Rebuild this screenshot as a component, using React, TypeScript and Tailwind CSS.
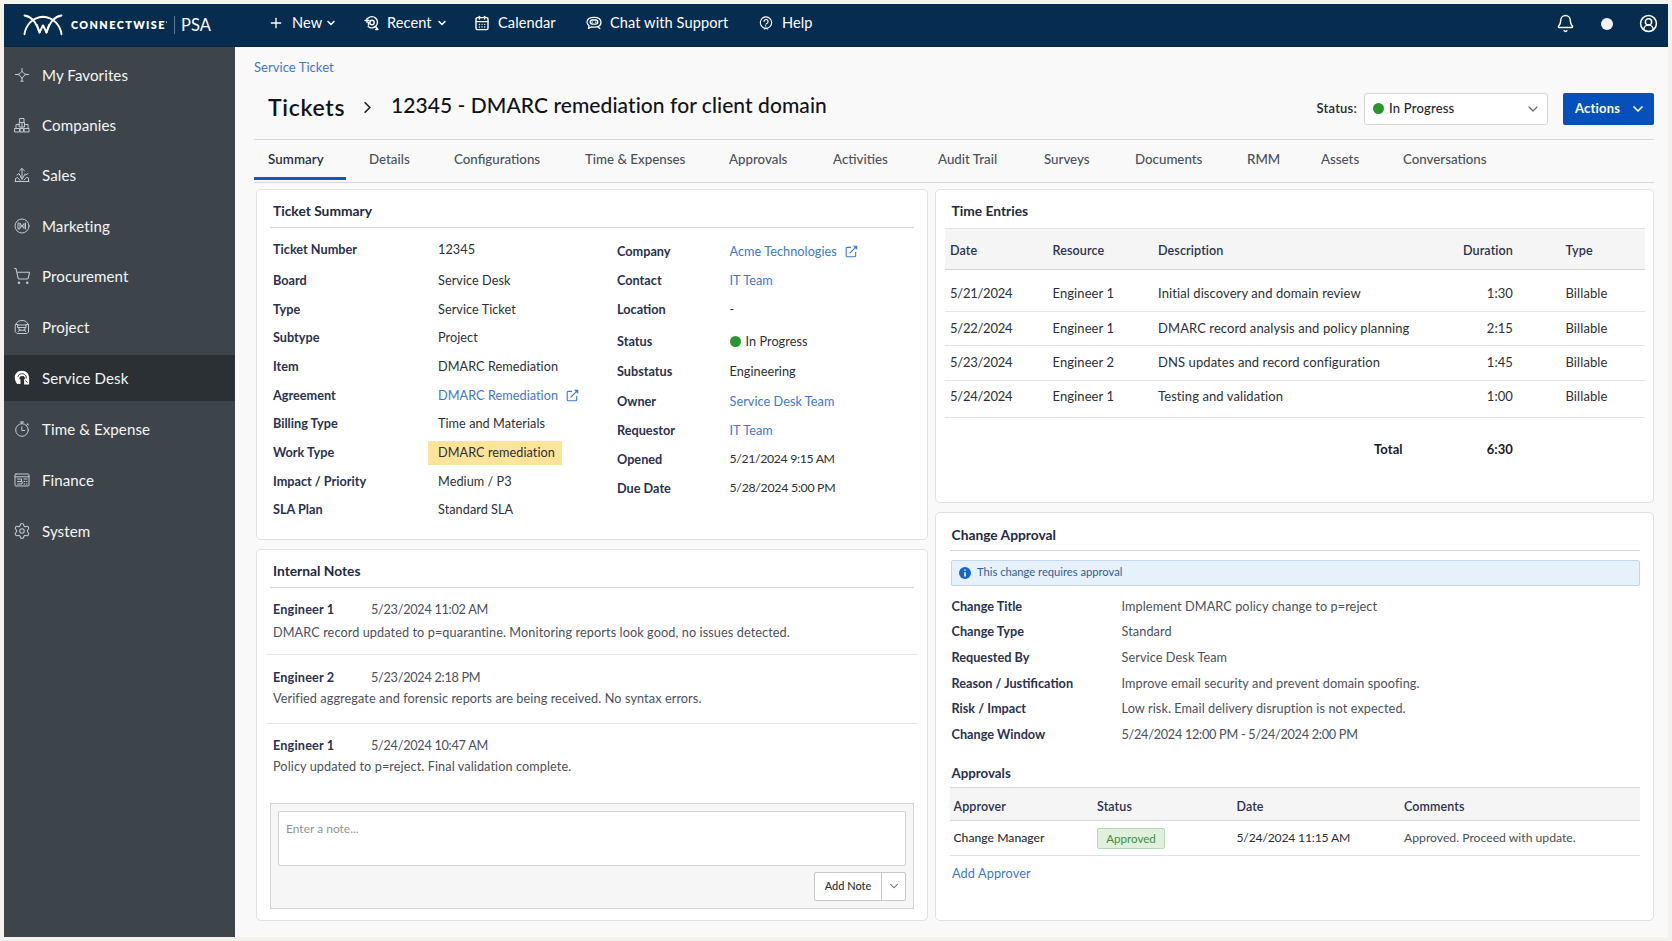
import type { ReactNode } from "react";
import { Bell, CalendarDays, ChevronDown, ChevronRight, CircleUserRound, Plus, Settings, ShoppingCart } from "lucide-react";

function Glyph({ children, className = "size-4" }: { children: ReactNode; className?: string }) {
  return (
    <svg viewBox="0 0 16 16" fill="none" stroke="currentColor" strokeWidth="1" strokeLinecap="round" strokeLinejoin="round" className={className}>
      {children}
    </svg>
  );
}

const FavoritesIcon = () => (
  <Glyph>
    <path d="M8 1.500v2.700L6 6.500 4 7.500H1.500M8 4.200l2 2.300 2 1h2.500M4 7.500l2.200 1.300L8 11.500l1.800-2.700L12 7.500M8 11.500v2.500M6.800 14.200h2.400" />
  </Glyph>
);

const CompaniesIcon = () => (
  <Glyph>
    <path d="M6 1.500h4v4H6zM5.500 5.500h5v4.500h-5zM1 11.500h4.500V15H1zM6.500 11.500h3V15h-3zM10.500 11.500H15V15h-4.500zM2 11.500V7.500h3.500M14 11.500V7.500h-3.500M8 5.500V11" />
  </Glyph>
);

const SalesIcon = () => (
  <Glyph>
    <path d="M8 11V1.500M5.500 4 8 1.500 10.500 4M1 14.500h14M1.500 14.500v-3l2-1 2.500 3M3 8l2-1.500 3 6 3-5.500M10 13l2.500-2.500 2 .5v3.500M11.500 8l2.500-1.500" />
  </Glyph>
);

const MarketingIcon = () => (
  <Glyph>
    <circle cx="8" cy="8" r="7" />
    <path d="M5 5H4v6h1.500M6 5.500v5l2-2.500 2 2.500v-5L8 8zM11.500 5v6" />
  </Glyph>
);

const ProjectIcon = () => (
  <Glyph>
    <path d="M1.500 5.500 4 2.500c2.500-1.300 5.500-1.300 8 0l2.500 3v7.500l-1.500 1.500H3L1.500 13zM4 6h8v2.500H4zM5 8.500v2.800h6V8.500M4.500 12.500l1.500-2M11.500 12.500l-1.500-2M1.500 5.500H4M12 5.500h2.500" />
  </Glyph>
);

const ServiceDeskIcon = () => (
  <svg viewBox="0 0 16 16" className="size-4">
    <path d="M8 .8C3.600.800.800 3.700.800 7.600c0 2.600 1 4.600 2.400 6.300h3.300V9.500L5 8.200l1.500-1.900L9.800 6l1.500 2.200-1.200 1.300v5.100h5V8C15.100 3.700 12.200.8 8 .8z" fill="#fff" />
    <path d="M4 6.800C4.500 3.900 8 3 10.300 4.300c1.600.9 2.300 2.400 1.900 4.200M8.200 8v6.600M11.500 10.500l2 2.200" stroke="#2b3033" strokeWidth="1" fill="none" />
  </svg>
);

const TimeIcon = () => (
  <Glyph>
    <circle cx="8" cy="9" r="6.300" />
    <path d="M6.300 1h3.400M8 1v1.700M13.200 2.700l1.300 1.200M12.300 4.500l1.500-1.200M7.800 5.800V9.500h2.800" />
  </Glyph>
);

const FinanceIcon = () => (
  <Glyph>
    <rect x="1" y="2" width="14" height="12" rx="1" />
    <path d="M1 4.800h14M3.500 7h4v2.500h-4M3.500 12H8V9.500M10 7h3M10 9.500h.8M12.500 9.500h.5M10 12h.8M12.500 12h.5" />
  </Glyph>
);

const RecentIcon = () => (
  <Glyph className="size-[16px]">
    <g strokeWidth="1.400">
      <path d="M4 3.200A5.600 5.600 0 1 1 4.200 11.500M1 5.500h4M3 3.500v4M12 12l2 2.500h-2.500" />
      <circle cx="8" cy="7.500" r="2.200" />
      <path d="M4.500 7.500v2.500" />
    </g>
  </Glyph>
);

const ChatIcon = () => (
  <Glyph className="size-[16px]">
    <g strokeWidth="1.300">
      <path d="M8 2.300c4.200 0 7 1.900 7 4.900s-2.800 4.900-7 4.900c-.9 0-1.800-.1-2.500-.3l-3 1.700.5-2.900C1.700 9.700 1 8.500 1 7.200c0-3 2.800-4.900 7-4.900z" />
      <path d="M6.300 5h3.400a2.100 2.100 0 0 1 0 4.200H6.300a2.100 2.100 0 0 1 0-4.200zM6 7.100h.5M9.500 7.100h.5" />
      <path d="M12 12l1.800 1.500" />
    </g>
  </Glyph>
);

const HelpIcon = () => (
  <Glyph className="size-[14px]">
    <circle cx="8" cy="7.500" r="6.500" strokeWidth="1.300" />
    <path d="M5.800 6.300A2.300 2.300 0 1 1 9.400 8.200L8 9.300M7.300 11.300h.4M6 14.800l2-.8 2 .8" strokeWidth="1.300" />
  </Glyph>
);

const CalendarIcon = () => (
  <span className="flex size-4 items-center justify-center">
    <CalendarDays size={16} strokeWidth={2.100} />
  </span>
);

const ExternalIcon = () => (
  <svg viewBox="0 0 14 14" fill="none" stroke="currentColor" strokeWidth="1.200" className="size-[13px]">
    <path d="M6.500 2.500H2.300c-.6 0-1 .4-1 1v8.200c0 .6.400 1 1 1h8.200c.6 0 1-.4 1-1V7.500M5 9l7-7" />
    <path d="M8.500.800h4.700v4.700z" fill="currentColor" stroke="none" />
  </svg>
);

function Logo() {
  return (
    <svg viewBox="0 0 40 22" fill="none" stroke="#fff" strokeWidth="1.900" strokeLinecap="round" strokeLinejoin="round" className="h-[22px] w-[40px]">
      <path d="M1.500 20.200C2.500 11.500 9.500 3.200 20 2.700c10.500.5 17.500 8.800 18.500 17.500" />
      <path d="M1.500 1.500c6.500 1 11 5 15 17l3.300-7h.4l3.300 7c4-12 8.500-16 15-17" />
      <path d="M14 11l2.500 7.500M26 11l-2.500 7.500" />
    </svg>
  );
}

function Dot() {
  return <span className="size-[11px] shrink-0 rounded-full bg-[#2b952d]" />;
}

function Header() {
  return (
    <header className="flex h-[43px] shrink-0 items-center border-b border-[#0a2340] bg-[#062c50] text-white">
      <div className="flex w-[266px] items-center pl-[19px]">
        <Logo />
        <span className="ml-[8px] flex w-[103px] pt-px text-[10.800px] font-extrabold tracking-[1.430px] whitespace-nowrap">
          CONNECTWISE
          <span className="mt-[4px] size-[1.500px] rounded-full bg-[#a9bccd]" />
        </span>
        <span className="h-[18px] w-px bg-[#5d7b98]" />
        <span className="ml-[6px] text-[16.500px]">PSA</span>
      </div>
      <nav className="flex flex-1 items-center pb-[4px] text-[14.600px] leading-[20px] tracking-[0.080px]">
        <div className="flex w-[94px] items-center">
          <Plus size={16} strokeWidth={2} className="-ml-[2px]" />
          <span className="ml-[8px]">New</span>
          <ChevronDown size={12} strokeWidth={3} className="ml-[3px]" />
        </div>
        <div className="flex w-[110px] items-center">
          <RecentIcon />
          <span className="ml-[7px]">Recent</span>
          <ChevronDown size={12} strokeWidth={3} className="ml-[4px]" />
        </div>
        <div className="flex w-[112px] items-center">
          <CalendarIcon />
          <span className="ml-2">Calendar</span>
        </div>
        <div className="flex w-[173px] items-center">
          <ChatIcon />
          <span className="ml-2">Chat with Support</span>
        </div>
        <div className="flex items-center">
          <HelpIcon />
          <span className="ml-[9px]">Help</span>
        </div>
      </nav>
      <div className="flex items-center pr-[10px] pb-[3px]">
        <Bell size={19} strokeWidth={1.800} />
        <span className="ml-[26px] size-[12px] rounded-full bg-[#f1f2f3]" />
        <CircleUserRound size={19} strokeWidth={1.900} className="ml-[26px]" />
      </div>
    </header>
  );
}

const sidebarItems: { label: string; icon: ReactNode; height: string; active?: boolean }[] = [
  { label: "My Favorites", icon: <FavoritesIcon />, height: "h-[50px]" },
  { label: "Companies", icon: <CompaniesIcon />, height: "h-[50px]" },
  { label: "Sales", icon: <SalesIcon />, height: "h-[50px]" },
  { label: "Marketing", icon: <MarketingIcon />, height: "h-[52px]" },
  { label: "Procurement", icon: <ShoppingCart size={18} strokeWidth={1.400} className="-mx-px" />, height: "h-[48px]" },
  { label: "Project", icon: <ProjectIcon />, height: "h-[54px]" },
  { label: "Service Desk", icon: <ServiceDeskIcon />, height: "h-[48px]", active: true },
  { label: "Time & Expense", icon: <TimeIcon />, height: "h-[54px]" },
  { label: "Finance", icon: <FinanceIcon />, height: "h-[48px]" },
  { label: "System", icon: <Settings size={18} strokeWidth={1.400} className="-mx-px" />, height: "h-[54px]" },
];

function Sidebar() {
  return (
    <aside className="w-[231px] shrink-0 bg-[#3e454a] pt-[3px]">
      {sidebarItems.map((item) => (
        <div key={item.label} className={`flex items-center ${item.height}`}>
          <div className={`flex h-[46px] w-full items-center pl-[10px] ${item.active ? "bg-[#2b3034] text-white" : "text-[#c6cacc]"}`}>
            {item.icon}
            <span className="ml-[12px] text-[15.100px] tracking-[0.080px] text-[#f4f5f6]">{item.label}</span>
          </div>
        </div>
      ))}
    </aside>
  );
}

const tabs = [
  { label: "Summary", width: "w-[101px]" },
  { label: "Details", width: "w-[85px]" },
  { label: "Configurations", width: "w-[131px]" },
  { label: "Time & Expenses", width: "w-[144px]" },
  { label: "Approvals", width: "w-[104px]" },
  { label: "Activities", width: "w-[105px]" },
  { label: "Audit Trail", width: "w-[106px]" },
  { label: "Surveys", width: "w-[91px]" },
  { label: "Documents", width: "w-[112px]" },
  { label: "RMM", width: "w-[74px]" },
  { label: "Assets", width: "w-[82px]" },
  { label: "Conversations", width: "w-[100px]" },
];

function PageHeading() {
  return (
    <>
      <a className="mt-[10px] h-[20px] text-[13px] leading-[20px] tracking-[0.050px] text-[#3d76d3]">Service Ticket</a>
      <div className="mt-[4px] flex h-[57.500px] items-center pb-[5px] pl-[14px]">
        <h1 className="mb-px w-[90px] text-[23px] font-semibold tracking-[0.700px] text-[#111317]">Tickets</h1>
        <ChevronRight size={19} strokeWidth={2.200} className="text-[#22252b]" />
        <h2 className="mb-[5px] ml-[14px] text-[21px] font-medium tracking-[0.060px] text-[#111317]">12345 - DMARC remediation for client domain</h2>
        <div className="mt-[3px] ml-auto flex items-center text-[13px] tracking-[0.200px] text-[#24272e]">
          <span className="font-semibold">Status:</span>
          <div className="ml-[7px] flex h-[32px] w-[184px] items-center rounded-[3px] border border-[#d4d6d9] bg-white pr-[6px] pl-[8px]">
            <Dot />
            <span className="ml-[5px] font-medium">In Progress</span>
            <ChevronDown size={16} strokeWidth={1.800} className="ml-auto text-[#666a70]" />
          </div>
          <button className="ml-[15px] flex h-[32px] w-[91px] items-center rounded-[2px] bg-[#0550ba] pr-[8px] pl-[12px] font-bold text-white">
            Actions
            <ChevronDown size={16} strokeWidth={2.600} className="ml-auto" />
          </button>
        </div>
      </div>
      <div className="flex h-[44px] border-t border-b border-[#d6d8da] pl-[14px] text-[13.300px] text-[#4a505c]">
        {tabs.map((tab, i) => (
          <div key={tab.label} className={`${tab.width} shrink-0 ${i === 0 ? "relative text-[#2b3140]" : ""}`}>
            <span className={`block leading-[38.500px] whitespace-nowrap ${i === 0 ? "font-semibold tracking-[0.100px]" : "font-medium"}`}>{tab.label}</span>
            {i === 0 && <span className="absolute bottom-[2px] -left-[14px] h-[3px] w-[92px] bg-[#1157bf]" />}
          </div>
        ))}
      </div>
    </>
  );
}

function Card({ className, children }: { className: string; children: ReactNode }) {
  return <section className={`flex shrink-0 flex-col rounded-[5px] border border-[#e0e1e3] bg-white ${className}`}>{children}</section>;
}

const heading = "text-[13.800px] font-bold text-[#232a45]";
const label = "font-bold tracking-normal text-[#2a3150]";

const summaryLeft: [string, ReactNode][] = [
  ["Ticket Number", "12345"],
  ["Board", "Service Desk"],
  ["Type", "Service Ticket"],
  ["Subtype", "Project"],
  ["Item", "DMARC Remediation"],
  [
    "Agreement",
    <a className="flex items-center gap-[8px] text-[#3d76d3]">
      DMARC Remediation <ExternalIcon />
    </a>,
  ],
  ["Billing Type", "Time and Materials"],
  ["Work Type", <span className="-ml-[10px] flex h-[24px] w-[134px] items-center bg-[#fde49b] pl-[10px]">DMARC remediation</span>],
  ["Impact / Priority", "Medium / P3"],
  ["SLA Plan", "Standard SLA"],
];

const summaryRight: [string, ReactNode, string][] = [
  [
    "Company",
    <a className="flex items-center gap-[8px] text-[#3d76d3]">
      Acme Technologies <ExternalIcon />
    </a>,
    "h-[29px]",
  ],
  ["Contact", <a className="text-[#3d76d3]">IT Team</a>, "h-[29px]"],
  ["Location", "-", "h-[29px]"],
  [
    "Status",
    <span className="flex items-center gap-[5px]">
      <Dot /> In Progress
    </span>,
    "h-[34px]",
  ],
  ["Substatus", "Engineering", "h-[27px]"],
  ["Owner", <a className="text-[#3d76d3]">Service Desk Team</a>, "h-[32px]"],
  ["Requestor", <a className="text-[#3d76d3]">IT Team</a>, "h-[26px]"],
  ["Opened", <span className="text-[12.300px] tracking-[-0.350px]">5/21/2024 9:15 AM</span>, "h-[32px]"],
  ["Due Date", <span className="text-[12.300px] tracking-[-0.280px]">5/28/2024 5:00 PM</span>, "h-[26px]"],
];

function TicketSummary() {
  return (
    <Card className="h-[351px]">
      <div className={`mx-[13px] flex h-[38px] shrink-0 items-center border-b border-[#d4d6d8] pt-[7px] pl-[3px] ${heading}`}>Ticket Summary</div>
      <div className="flex pl-[16px] text-[12.700px] tracking-[0.050px] text-[#2c2f36]">
        <div className="w-[344px] pt-[8.200px]">
          {summaryLeft.map(([name, value], i) => (
            <div key={name} className={`flex h-[28.660px] items-center ${i === 0 ? "mb-[2px]" : ""}`}>
              <span className={`w-[165px] ${label}`}>{name}</span>
              {value}
            </div>
          ))}
        </div>
        <div className="pt-[10px]">
          {summaryRight.map(([name, value, height]) => (
            <div key={name} className={`flex items-center ${height}`}>
              <span className={`w-[112.500px] ${label}`}>{name}</span>
              {value}
            </div>
          ))}
        </div>
      </div>
    </Card>
  );
}

const notes = [
  { author: "Engineer 1", date: "5/23/2024 11:02 AM", body: "DMARC record updated to p=quarantine. Monitoring reports look good, no issues detected.", box: "h-[67px] pt-[11px] border-b", gap: "mt-[3px]" },
  { author: "Engineer 2", date: "5/23/2024 2:18 PM", body: "Verified aggregate and forensic reports are being received. No syntax errors.", box: "h-[69px] pt-[12px] border-b", gap: "mt-[1px]" },
  { author: "Engineer 1", date: "5/24/2024 10:47 AM", body: "Policy updated to p=reject. Final validation complete.", box: "h-[79px] pt-[11px]", gap: "mt-[1px]" },
];

function InternalNotes() {
  return (
    <Card className="mt-[9px] h-[372px]">
      <div className={`mx-[13px] flex h-[38px] items-center border-b border-[#d4d6d8] pt-[7px] pl-[3px] ${heading}`}>Internal Notes</div>
      <div className="mx-[9px] text-[12.700px] leading-[20px] tracking-[0.090px] text-[#4b5060]">
        {notes.map((note) => (
          <div key={note.date} className={`border-[#e6e7e9] pl-[7px] ${note.box}`}>
            <div className="flex">
              <span className="w-[98px] font-bold tracking-[0.150px] text-[#2a3150]">{note.author}</span>
              <span className="tracking-[-0.280px]">{note.date}</span>
            </div>
            <div className={note.gap}>{note.body}</div>
          </div>
        ))}
      </div>
      <div className="mx-[13px] flex h-[106px] flex-col border border-[#d3d5d7] bg-[#f6f6f6] p-[7px]">
        <div className="h-[55px] rounded-[2px] border border-[#cfd1d4] bg-white px-[7px] pt-[7px] text-[12px] leading-[20px] text-[#92959b]">Enter a note...</div>
        <div className="mt-[6px] flex h-[29px] w-[92px] self-end rounded-[2px] border border-[#c6c8cb] bg-white text-[11px] font-medium text-[#2c2f36]">
          <span className="flex w-[67px] items-center justify-center border-r border-[#c6c8cb]">Add Note</span>
          <span className="flex flex-1 items-center justify-center">
            <ChevronDown size={14} strokeWidth={1.800} className="text-[#5d6167]" />
          </span>
        </div>
      </div>
    </Card>
  );
}

const entryGrid = "grid grid-cols-[102.500px_105.500px_255px_100px_52.500px_1fr] items-center pl-[5px] whitespace-nowrap";

const entries = [
  ["5/21/2024", "Engineer 1", "Initial discovery and domain review", "1:30", "h-[42px] pt-[8px]"],
  ["5/22/2024", "Engineer 1", "DMARC record analysis and policy planning", "2:15", "h-[34px] pt-[2px]"],
  ["5/23/2024", "Engineer 2", "DNS updates and record configuration", "1:45", "h-[35px] pt-px"],
  ["5/24/2024", "Engineer 1", "Testing and validation", "1:00", "h-[37px] pb-[3px]"],
];

function TimeEntries() {
  return (
    <Card className="h-[314px]">
      <div className={`flex h-[38px] items-center pt-[6px] pl-[15.500px] ${heading}`}>Time Entries</div>
      <div className="mr-[8px] ml-[9px] text-[13px] tracking-[0.090px] text-[#2c2f36]">
        <div className={`${entryGrid} h-[42px] border-t border-b border-t-[#e0e1e3] border-b-[#d2d4d6] bg-[#f5f5f6] pt-[6px] text-[12.600px] font-semibold text-[#2a3150]`}>
          <span>Date</span>
          <span>Resource</span>
          <span>Description</span>
          <span className="text-right">Duration</span>
          <span />
          <span>Type</span>
        </div>
        {entries.map(([date, resource, description, duration, height]) => (
          <div key={date} className={`${entryGrid} border-b border-[#e3e4e6] ${height}`}>
            <span className="tracking-[-0.250px]">{date}</span>
            <span>{resource}</span>
            <span>{description}</span>
            <span className="text-right">{duration}</span>
            <span />
            <span>Billable</span>
          </div>
        ))}
        <div className="flex h-[64px] items-center pl-[429px] font-bold text-[#17191e]">
          <span className="w-[89px]">Total</span>
          <span className="w-[50px] text-right">6:30</span>
        </div>
      </div>
    </Card>
  );
}

const changeRows = [
  ["Change Title", "Implement DMARC policy change to p=reject"],
  ["Change Type", "Standard"],
  ["Requested By", "Service Desk Team"],
  ["Reason / Justification", "Improve email security and prevent domain spoofing."],
  ["Risk / Impact", "Low risk. Email delivery disruption is not expected."],
  ["Change Window", <span className="tracking-[-0.280px]">5/24/2024 12:00 PM - 5/24/2024 2:00 PM</span>],
] as [string, ReactNode][];

const approvalGrid = "grid grid-cols-[143.500px_139.500px_167.500px_1fr] items-center pl-[3.500px] whitespace-nowrap";

function ChangeApproval() {
  return (
    <Card className="mt-[9px] h-[409px] pr-[13px] pl-[14px]">
      <div className={`flex h-[38px] items-center border-b border-[#d4d6d8] pt-[8px] pl-[1.500px] ${heading}`}>Change Approval</div>
      <div className="mt-[9px] ml-px flex h-[26px] items-center rounded-[2px] border border-[#bfd8ef] bg-[#e7f1fb] pl-[7px] text-[11.200px] text-[#2d5f9e]">
        <svg viewBox="0 0 12 12" className="size-[12px]">
          <circle cx="6" cy="6" r="6" fill="#1668c3" />
          <path d="M6 2.500v1.300M6 5.200v4.200" stroke="#fff" strokeWidth="1.500" />
        </svg>
        <span className="ml-[6px]">This change requires approval</span>
      </div>
      <div className="mt-[7.800px] pl-[1.500px] text-[12.700px] tracking-[0.090px] text-[#4b5060]">
        {changeRows.map(([name, value]) => (
          <div key={name} className="flex h-[25.700px] items-center">
            <span className={`w-[170px] ${label}`}>{name}</span>
            {value}
          </div>
        ))}
      </div>
      <div className="mt-[12.200px] flex h-[27px] items-center pt-px pl-[1.500px] text-[13.300px] font-bold text-[#2a3150]">Approvals</div>
      <div className="text-[12.200px] text-[#2c2f36]">
        <div className={`${approvalGrid} h-[34px] border-t border-b border-[#d6d8da] bg-[#f5f5f6] pt-[8px] pb-px text-[12.500px] leading-[16px] font-semibold tracking-[0.100px] text-[#2a3150]`}>
          <span>Approver</span>
          <span>Status</span>
          <span>Date</span>
          <span>Comments</span>
        </div>
        <div className={`${approvalGrid} h-[35px] border-b border-[#dfe1e3] pt-[2px]`}>
          <span className="font-medium">Change Manager</span>
          <span className="flex h-[21px] w-[68px] items-center justify-center rounded-[2px] border border-[#b7d9b5] bg-[#e0f0dd] text-[11.600px] text-[#3d8f42]">Approved</span>
          <span className="tracking-[-0.200px]">5/24/2024 11:15 AM</span>
          <span className="text-[#4b4f57]">Approved. Proceed with update.</span>
        </div>
      </div>
      <a className="mt-[7px] pl-[2px] text-[12.700px] leading-[20px] tracking-[0.120px] text-[#3d76d3]">Add Approver</a>
    </Card>
  );
}

export default function App() {
  return (
    <div className="h-[941px] w-[1672px] overflow-hidden bg-[#f3f2ec] p-1 font-['Lato','Liberation_Sans',sans-serif]">
      <div className="flex h-[933px] flex-col">
        <Header />
        <div className="flex flex-1">
          <Sidebar />
          <main className="flex w-[1433px] flex-col bg-[#f9f9f9] pr-[14px] pl-[19px]">
            <PageHeading />
            <div className="mt-[6px] ml-[2px] flex gap-[7px]">
              <div className="flex w-[672px] flex-col">
                <TicketSummary />
                <InternalNotes />
              </div>
              <div className="flex w-[719px] flex-col">
                <TimeEntries />
                <ChangeApproval />
              </div>
            </div>
          </main>
        </div>
      </div>
    </div>
  );
}
